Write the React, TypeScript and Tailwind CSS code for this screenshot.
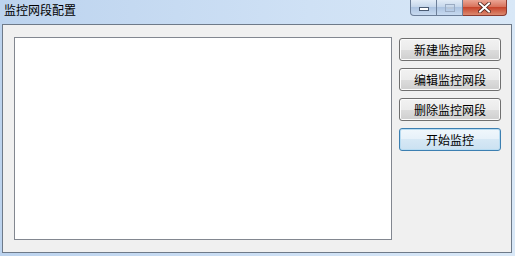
import React from "react";

const font = { fontFamily: '"Noto Sans CJK SC", "Microsoft YaHei", sans-serif' };

function Btn({ label, primary }: { label: string; primary?: boolean }) {
  return (
    <div
      className={
        "h-[23px] w-[102px] rounded-[3px] border flex items-center justify-center text-[12px] text-black " +
        (primary
          ? "border-[#3c7fb1] bg-[linear-gradient(#f0f7fc_0%,#e6f1f9_50%,#d6e8f5_50%,#cbe1f1_100%)] shadow-[inset_0_0_0_1px_#b8dcf2]"
          : "border-[#707070] bg-[linear-gradient(#f2f2f2_0%,#ebebeb_50%,#dddddd_50%,#cfcfcf_100%)] shadow-[inset_0_0_0_1px_#fcfcfc]")
      }
    >
      <span className="leading-none">{label}</span>
    </div>
  );
}

export default function App() {
  return (
    <div
      className="w-[515px] h-[256px] flex flex-col bg-[linear-gradient(90deg,#bcd3ee,#cfe1f5_60%,#d9e8f7)] overflow-hidden"
      style={font}
    >
      <div className="h-[24px] flex items-start justify-between relative">
        <span className="pl-[4px] pt-[3px] text-[12px] leading-[14px] text-black">监控网段配置</span>
        <div className="flex mr-[8px] h-[16px]">
          <div className="w-[27px] h-[16px] rounded-bl-[4px] border border-t-0 border-[#6c7f99] bg-[linear-gradient(#e2ecf7,#c3d5ea_50%,#adc4e1_50%,#c7daf0)] flex items-center justify-center">
            <div className="w-[10px] h-[4px] border border-[#4a5b73] bg-white mt-[3px]" />
          </div>
          <div className="w-[26px] h-[16px] border-y border-r border-t-0 border-[#6c7f99] bg-[linear-gradient(#e2ecf7,#c3d5ea_50%,#adc4e1_50%,#c7daf0)] flex items-center justify-center">
            <div className="w-[10px] h-[8px] border border-[#9aabc2] flex items-center justify-center">
              <div className="w-[6px] h-[2px] bg-[#b8c6d8]" />
            </div>
          </div>
          <div className="w-[44px] h-[16px] rounded-br-[4px] border border-l-0 border-t-0 border-[#8a3a30] bg-[linear-gradient(#eba594,#d8735c_45%,#c7452c_50%,#dc8a70)] flex items-center justify-center">
            <svg width="13" height="11" viewBox="0 0 13 11">
              <path d="M2 1.5 L11 9.5 M11 1.5 L2 9.5" stroke="#4a2018" strokeWidth="3.6" strokeLinecap="square" />
              <path d="M2 1.5 L11 9.5 M11 1.5 L2 9.5" stroke="#ffffff" strokeWidth="2" strokeLinecap="square" />
            </svg>
          </div>
        </div>
      </div>
      <div className="flex-1 ml-[2px] mr-[3px] mb-[3px] border border-[#6e7a89] bg-[#f0f0f0] flex pl-[11px] pt-[12px] pr-[10px]">
        <div className="w-[378px] h-[203px] border border-[#828790] bg-white" />
        <div className="ml-[7px] mt-[1px] flex flex-col gap-[7px]">
          <Btn label="新建监控网段" />
          <Btn label="编辑监控网段" />
          <Btn label="删除监控网段" />
          <Btn label="开始监控" primary />
        </div>
      </div>
    </div>
  );
}
